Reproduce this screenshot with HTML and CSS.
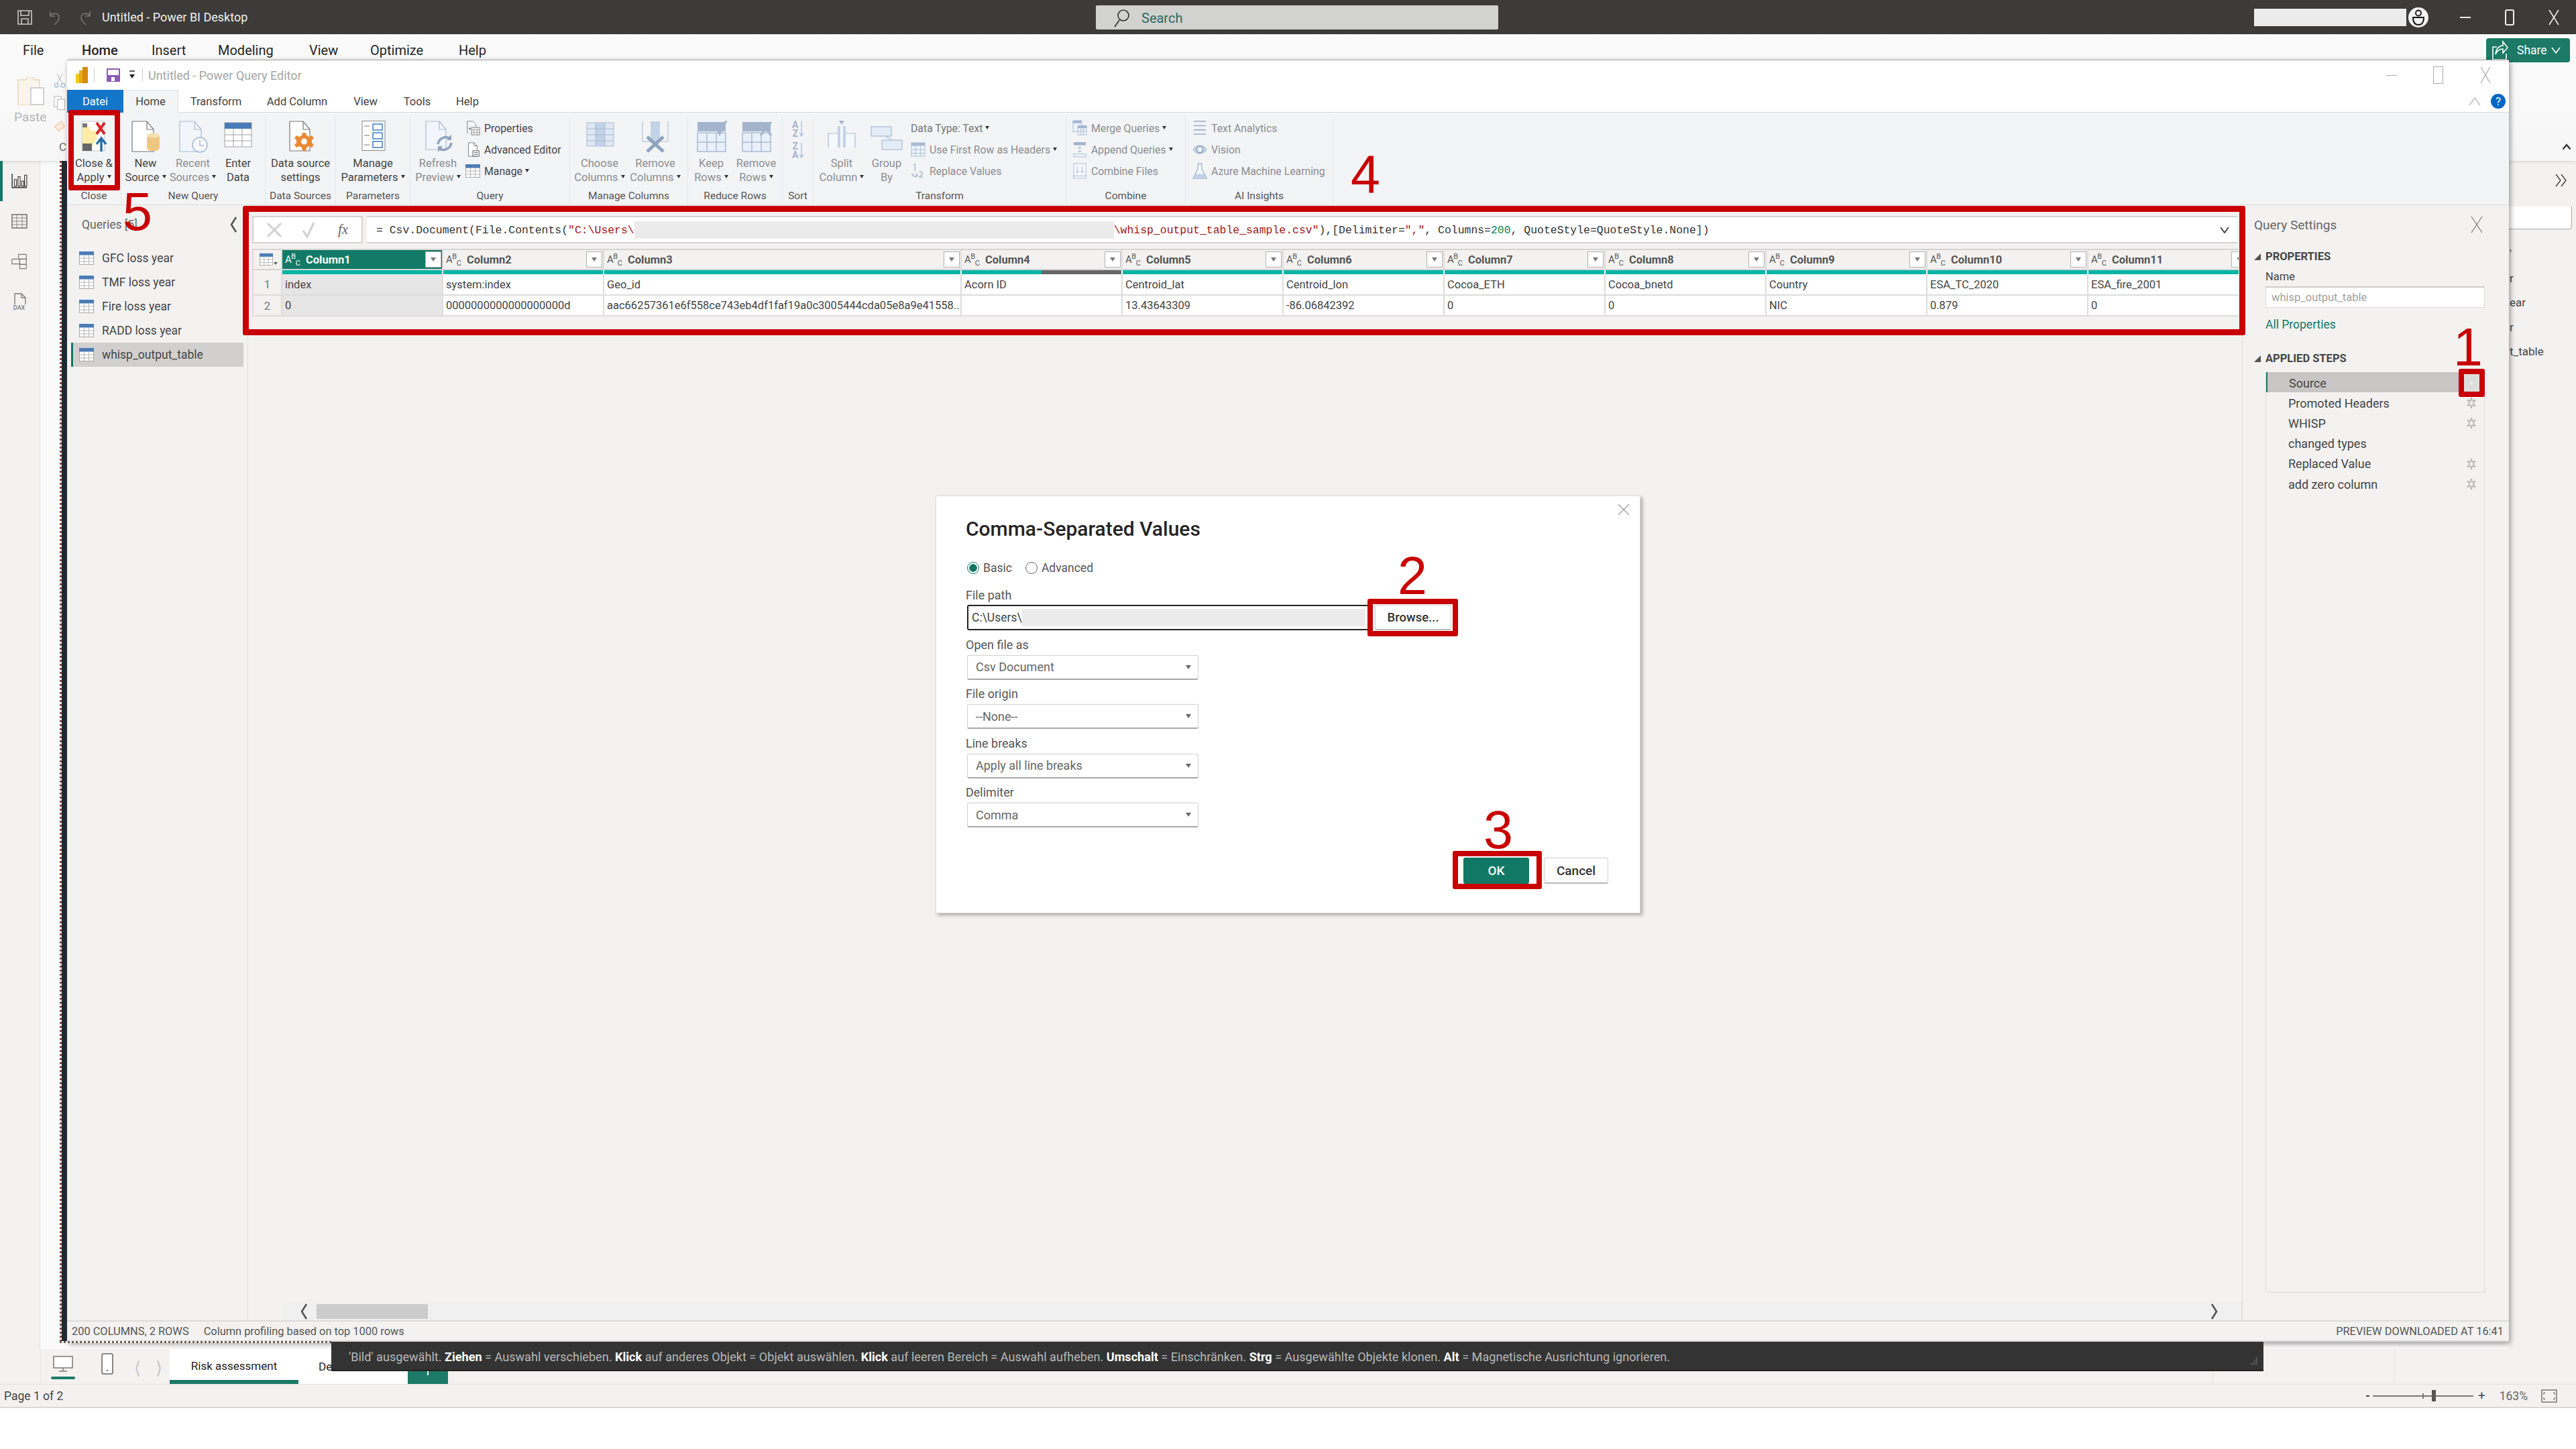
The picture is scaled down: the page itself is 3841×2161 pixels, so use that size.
FILE: index.html
```html
<!DOCTYPE html>
<html lang="en">
<head>
    <meta charset="UTF-8">
    <title>Untitled - Power BI Desktop</title>
    <link rel="stylesheet" href="styles.css">
</head>
<body>
    <!-- shared icons -->
    <svg class="defs" aria-hidden="true">
        <symbol id="i-table" viewBox="0 0 22 20">
            <rect x="0.5" y="0.5" width="21" height="19" fill="#fff" stroke="#a9a9a9"/>
            <rect x="0" y="0" width="22" height="5.5" fill="#4a7cb8"/>
            <path d="M7.5 5v15M14.5 5v15M0 10h22M0 15h22" stroke="#b5b5b5" fill="none"/>
        </symbol>
        <symbol id="i-gear" viewBox="0 0 14 18">
            <path d="M7 1v16M1 4.5l12 9M13 4.5l-12 9" stroke="#b4b4b4" stroke-width="2.4"/>
            <ellipse cx="7" cy="9" rx="4.6" ry="5.8" fill="#c4c4c4"/>
            <ellipse cx="7" cy="9" rx="2.2" ry="2.8" fill="#f3f2f1"/>
        </symbol>
        <symbol id="i-table-pale" viewBox="0 0 24 24">
            <rect x="1" y="1" width="22" height="22" fill="#eef3fa" stroke="#a9bbd3"/>
            <rect x="1" y="1" width="22" height="5" fill="#a9bbd3"/>
            <path d="M8 6v17M16 6v17M1 12h22M1 18h22" stroke="#a9bbd3" fill="none"/>
        </symbol>
        <symbol id="i-rows" viewBox="0 0 48 48">
            <rect x="3" y="18" width="42" height="28" fill="#e9f0fa" stroke="#a9bbd3" stroke-width="1.5"/>
            <path d="M17 18v28M31 18v28M3 32h42" stroke="#a9bbd3" stroke-width="1.5" fill="none"/>
            <rect x="3" y="2" width="42" height="14" fill="#a4b4cd"/>
        </symbol>
    </svg>

    <div class="desktop">
        <header class="titlebar">
            <div class="titlebar-left">
                <svg class="tb-save" viewBox="0 0 22 22"><path d="M1 1h20v20H1zM5 1v7h12V1M6 21v-8h10v8" fill="none" stroke="#c9c9c9" stroke-width="1.6"/></svg>
                <svg class="tb-arrow" viewBox="0 0 22 24"><path d="M4 3v7h7M4 9c5-5 14-3 13 4 0 4-4 7-7 10" fill="none" stroke="#777" stroke-width="1.6"/></svg>
                <svg class="tb-arrow" viewBox="0 0 22 24"><path d="M18 3v7h-7M18 9c-5-5-14-3-13 4 0 4 4 7 7 10" fill="none" stroke="#777" stroke-width="1.6"/></svg>
                <span class="tb-title">Untitled - Power BI Desktop</span>
            </div>
            <div class="tb-search">
                <svg class="tb-search-ic" viewBox="0 0 24 28"><circle cx="15" cy="10" r="8" fill="none" stroke="#333" stroke-width="1.6"/><path d="M9 17L2 27" stroke="#333" stroke-width="1.8"/></svg>
                <span>Search</span>
            </div>
            <div class="titlebar-right">
                <div class="tb-user"></div>
                <svg class="tb-avatar" viewBox="0 0 30 30"><circle cx="15" cy="15" r="15" fill="#f2f2f2"/><circle cx="15" cy="8.5" r="4" fill="none" stroke="#111" stroke-width="1.8"/><path d="M7 15h16c0 7-3 11-8 11s-8-4-8-11z" fill="none" stroke="#111" stroke-width="1.8"/></svg>
                <div class="tb-ctrl tb-ctrl-first"><span class="ctrl-min"></span></div>
                <div class="tb-ctrl"><span class="ctrl-max"></span></div>
                <div class="tb-ctrl">
                    <svg class="ctrl-x" viewBox="0 0 16 24"><path d="M1 1l14 22M15 1L1 23" stroke="#eee" stroke-width="1.6"/></svg>
                </div>
            </div>
        </header>

        <section class="pbi-ribbon">
            <nav class="pbi-menu">
                <span>File</span><span class="is-active">Home</span><span>Insert</span><span>Modeling</span><span>View</span><span>Optimize</span><span>Help</span>
                <div class="share">
                    <svg class="share-ic" viewBox="0 0 24 30"><path d="M7 10H1v19h20v-9" fill="none" stroke="#fff" stroke-width="1.6"/><path d="M5 21c1-9 6-13 11-13V2l7 9-7 8v-6c-5 0-9 3-11 8z" fill="none" stroke="#fff" stroke-width="1.6"/></svg>
                    <span>Share</span>
                    <svg class="share-car" viewBox="0 0 14 12"><path d="M1 2l6 8 6-8" fill="none" stroke="#fff" stroke-width="1.6"/></svg>
                </div>
            </nav>
            <div class="pbi-clip">
                <div class="paste">
                    <svg class="paste-ic" viewBox="0 0 42 42"><path d="M2 4h12l2-4h8l2 4h8v38H2z" fill="#fbf4ec" stroke="#ecd3b4" stroke-width="1.5"/><rect x="21" y="16" width="19" height="25" fill="#fff" stroke="#c3c3c3" stroke-width="1.5"/></svg>
                    <span>Paste</span>
                </div>
                <div class="paste-tools">
                    <svg viewBox="0 0 22 26"><path d="M6 0l10 18M16 0L6 18" stroke="#aaa" fill="none"/><circle cx="5" cy="21" r="3.5" fill="none" stroke="#9cb7d4" stroke-width="1.4"/><circle cx="17" cy="21" r="3.5" fill="none" stroke="#9cb7d4" stroke-width="1.4"/></svg>
                    <svg viewBox="0 0 22 26"><rect x="1" y="1" width="13" height="19" fill="#fff" stroke="#bbb" stroke-width="1.4"/><rect x="7" y="6" width="13" height="19" fill="#fff" stroke="#bbb" stroke-width="1.4"/></svg>
                    <svg viewBox="0 0 22 26"><path d="M2 14l12-9 6 9-10 9z" fill="#fbeadb" stroke="#edc39d" stroke-width="1.5"/></svg>
                </div>
            </div>
            <div class="pbi-clip-label">
                <span class="clip-name">Clipboard</span>
                <svg class="ribbon-caret" viewBox="0 0 14 10"><path d="M1.5 8.5L7 2l5.5 6.5" fill="none" stroke="#333" stroke-width="2.4"/></svg>
            </div>
        </section>

        <main class="pbi-main">
            <aside class="rail">
                <div class="rail-item is-active">
                    <svg class="rail-ic" viewBox="0 0 22 20"><path d="M1 0v19h20" fill="none" stroke="#333" stroke-width="1.3"/><path d="M4 8h3v9H4zM9 4h3v13H9zM14 10h3v7h-3zM18 2h3v15h-3z" fill="none" stroke="#333"/></svg>
                </div>
                <div class="rail-item"><svg class="rail-ic" viewBox="0 0 24 22"><rect x="1" y="1" width="22" height="20" fill="none" stroke="#666" stroke-width="1.4"/><path d="M1 6h22M1 11h22M1 16h22M8 1v20M16 1v20" stroke="#888" fill="none"/></svg></div>
                <div class="rail-item"><svg class="rail-ic" viewBox="0 0 27 26"><path d="M12 1h13v8H12zM1 9h13v8H1zM14 18h11v7H14z" fill="#f3f2f1" stroke="#777" stroke-width="1.3"/><path d="M14 9h11v9H14z" fill="none" stroke="#777" stroke-width="1.3"/></svg></div>
                <div class="rail-item rail-dax">
                    <svg class="rail-ic" viewBox="0 0 24 24"><path d="M5 17V1h10l6 6v10M15 1v6h6" fill="none" stroke="#777" stroke-width="1.3"/></svg>
                    <span>DAX</span>
                </div>
            </aside>
            <div class="canvas"></div>
            <aside class="behind-panel">
                <svg class="behind-chev" viewBox="0 0 20 20"><path d="M2 1l7 9-7 9M10 1l7 9-7 9" fill="none" stroke="#333" stroke-width="1.3"/></svg>
                <div class="behind-card"></div>
                <div class="behind-line behind-line-first">'</div>
                <div class="behind-line">r</div>
                <div class="behind-line">ear</div>
                <div class="behind-line">r</div>
                <div class="behind-line">t_table</div>
            </aside>
        </main>

        <div class="pbi-tabs">
            <div class="view-btns">
                <div class="view-desktop">
                    <svg viewBox="0 0 30 24"><rect x="1" y="1" width="28" height="17" fill="#fff" stroke="#777" stroke-width="1.5"/><path d="M15 18v4M9 23h12" stroke="#777" stroke-width="1.5"/></svg>
                    <span class="view-mark"></span>
                </div>
                <svg class="view-phone" viewBox="0 0 18 32"><rect x="1" y="1" width="16" height="30" rx="2" fill="#fff" stroke="#666" stroke-width="1.5"/><rect x="8" y="25" width="2" height="2" fill="#666"/></svg>
                <span class="page-arrow">&#10216;</span>
                <span class="page-arrow page-arrow-next">&#10217;</span>
            </div>
            <div class="page-tab is-active">Risk assessment</div>
            <div class="page-tab page-tab-second">Deutsch</div>
            <div class="page-add"><span></span></div>
            <div class="tabs-rest"><span class="rest-line"></span></div>
        </div>

        <footer class="pbi-status">
            <span class="page-count">Page 1 of 2</span>
            <div class="zoom-ctl">
                <span class="z-minus"></span>
                <div class="z-track"><span class="z-tick"></span><span class="z-thumb"></span></div>
                <span class="z-plus">+</span>
                <span class="z-pct">163%</span>
                <svg class="z-fit" viewBox="0 0 24 20"><rect x="1" y="1" width="22" height="18" fill="none" stroke="#777" stroke-width="1.5"/><path d="M6 5H4v3M18 5h2v3M6 15H4v-3M18 15h2v-3" fill="none" stroke="#555"/></svg>
            </div>
        </footer>
        <div class="page-end"></div>
    </div>

    <!-- Power Query window -->
    <div class="pq">
        <div class="pq-title">
            <svg class="pq-logo" viewBox="0 0 18 24"><rect x="0" y="10" width="8" height="14" fill="#f2c811"/><rect x="5" y="5" width="8" height="19" fill="#e8ac13"/><rect x="10" y="0" width="8" height="24" fill="#d8890c"/></svg>
            <span class="pq-sep"></span>
            <svg class="pq-save" viewBox="0 0 20 20"><path d="M1 1h18v18H1z" fill="#fff" stroke="#8c5bb5" stroke-width="2"/><rect x="1" y="10" width="18" height="9" fill="#8c5bb5"/><rect x="7" y="13" width="5" height="6" fill="#fff"/></svg>
            <svg class="pq-drop" viewBox="0 0 10 14"><path d="M1 1h8" stroke="#222" stroke-width="1.5"/><path d="M1 6h8l-4 6z" fill="#222"/></svg>
            <span class="pq-sep"></span>
            <span class="pq-name">Untitled - Power Query Editor</span>
            <div class="pq-ctrls">
                <span class="pq-min"></span>
                <span class="pq-max"></span>
                <svg class="pq-x" viewBox="0 0 16 26"><path d="M1 1l14 24M15 1L1 25" stroke="#aaa" stroke-width="1.2"/></svg>
            </div>
        </div>

        <nav class="pq-tabs">
            <span class="pq-tab pq-tab-file">Datei</span>
            <span class="pq-tab pq-tab-home">Home</span>
            <span class="pq-tab">Transform</span>
            <span class="pq-tab">Add Column</span>
            <span class="pq-tab">View</span>
            <span class="pq-tab">Tools</span>
            <span class="pq-tab">Help</span>
            <div class="pq-tabs-end">
                <svg class="pq-caret" viewBox="0 0 18 14"><path d="M1 13L9 2l8 11" fill="none" stroke="#bbb" stroke-width="1.5"/></svg>
                <span class="pq-help">?</span>
            </div>
        </nav>

        <div class="pq-ribbon">
            <div class="rg rg-close">
                <div class="rg-body">
                    <div class="rb">
                        <svg viewBox="0 0 48 48">
                            <rect x="6" y="1" width="34" height="44" fill="#fff" stroke="#c9c9c9"/>
                            <path d="M7 9h11v6h10v14l-4 5v3H7z" fill="#fdeba6"/>
                            <rect x="7" y="4" width="7" height="6" fill="#777"/>
                            <rect x="7" y="34" width="14" height="11" fill="#666"/>
                            <path d="M28 3l12 17M40 3L28 20" stroke="#d9262b" stroke-width="4" fill="none"/>
                            <path d="M35 46V27M28 35l7-9 7 9" stroke="#2a6ea8" stroke-width="3.5" fill="none"/>
                        </svg>
                        <span>Close &amp;<br>Apply <i class="car"></i></span>
                    </div>
                </div>
                <div class="rg-label">Close</div>
            </div>

            <div class="rg rg-newq">
                <div class="rg-body">
                    <div class="rb">
                        <svg viewBox="0 0 48 48"><path d="M4 1h22l10 12v33H4z" fill="#fff" stroke="#777" stroke-width="1.2"/><path d="M26 1v12h10" fill="none" stroke="#777" stroke-width="1.2"/><rect x="26" y="20" width="19" height="25" rx="6" fill="#efc880"/><ellipse cx="35.5" cy="22" rx="9.5" ry="3.5" fill="#f6dfb0"/></svg>
                        <span>New<br>Source <i class="car"></i></span>
                    </div>
                    <div class="rb is-off">
                        <svg viewBox="0 0 48 48"><path d="M4 1h22l10 12v33H4z" fill="#f2f6fc" stroke="#a9bbd3" stroke-width="1.2"/><path d="M26 1v12h10" fill="none" stroke="#a9bbd3" stroke-width="1.2"/><circle cx="34" cy="36" r="11" fill="#f5f7fa" stroke="#a9bbd3" stroke-width="1.6"/><path d="M34 29v8h6" fill="none" stroke="#a9bbd3" stroke-width="1.4"/></svg>
                        <span>Recent<br>Sources <i class="car"></i></span>
                    </div>
                    <div class="rb">
                        <svg viewBox="0 0 48 48"><rect x="4" y="3" width="40" height="36" fill="#fff" stroke="#a0a0a0"/><rect x="4" y="3" width="40" height="9" fill="#4a7cb8"/><path d="M17 12v27M30 12v27M4 21h40M4 30h40" stroke="#a0a0a0" fill="none"/></svg>
                        <span>Enter<br>Data</span>
                    </div>
                </div>
                <div class="rg-label">New Query</div>
            </div>

            <div class="rg rg-ds">
                <div class="rg-body">
                    <div class="rb">
                        <svg viewBox="0 0 48 48"><path d="M8 1h20l10 12v32H8z" fill="#fff" stroke="#777" stroke-width="1.2"/><path d="M28 1v12h10" fill="none" stroke="#777" stroke-width="1.2"/><path d="M28 19l5 0 1 4 4 2 4-2 3 4-3 3v4l3 3-3 4-4-2-4 2-1 5h-5l-1-5-4-2-4 2-3-4 3-3v-4l-3-3 3-4 4 2 4-2z" transform="translate(-1 -1)" fill="#ea8a34"/><circle cx="29.5" cy="31" r="4.5" fill="#fff"/></svg>
                        <span>Data source<br>settings</span>
                    </div>
                </div>
                <div class="rg-label">Data Sources</div>
            </div>

            <div class="rg rg-params">
                <div class="rg-body">
                    <div class="rb">
                        <svg viewBox="0 0 48 48"><rect x="8" y="0.5" width="34" height="44" fill="#fff" stroke="#8a8a8a"/><path d="M11 8h8M11 22h8M11 36h8" stroke="#777"/><rect x="24" y="5" width="14" height="9" fill="#fff" stroke="#3d7ec4" stroke-width="1.5"/><rect x="24" y="18" width="14" height="9" fill="#fff" stroke="#3d7ec4" stroke-width="1.5"/><rect x="24" y="31" width="14" height="9" fill="#fff" stroke="#3d7ec4" stroke-width="1.5"/></svg>
                        <span>Manage<br>Parameters <i class="car"></i></span>
                    </div>
                </div>
                <div class="rg-label">Parameters</div>
            </div>

            <div class="rg rg-query">
                <div class="rg-body">
                    <div class="rb is-off">
                        <svg viewBox="0 0 48 48"><path d="M6 1h20l10 12v30H6z" fill="#f2f6fc" stroke="#a9bbd3" stroke-width="1.2"/><path d="M26 1v12h10" fill="none" stroke="#a9bbd3" stroke-width="1.2"/><path d="M24 35a12 12 0 0 1 19-8M44 33a12 12 0 0 1-19 8" fill="none" stroke="#8ea2bd" stroke-width="3.5"/><path d="M44 20v9h-7zM24 47v-9h7z" fill="#8ea2bd"/></svg>
                        <span>Refresh<br>Preview <i class="car"></i></span>
                    </div>
                    <div class="rs-col">
                        <div class="rs"><svg viewBox="0 0 24 24"><path d="M3 1h9l5 5v4M3 1v20" fill="#fff" stroke="#777"/><rect x="10" y="11" width="13" height="12" fill="#fff" stroke="#777"/><path d="M10 15h13M10 19h13M14 11v12M19 11v12" stroke="#999"/><circle cx="7" cy="13" r="1.5" fill="#777"/></svg><span>Properties</span></div>
                        <div class="rs"><svg viewBox="0 0 24 24"><path d="M5 1h9l5 5v17H5z" fill="#fff" stroke="#777"/><path d="M14 1v5h5" fill="none" stroke="#777"/><rect x="12" y="14" width="10" height="9" fill="#fff" stroke="#555"/><path d="M14 17h6M14 20h6" stroke="#555"/></svg><span>Advanced Editor</span></div>
                        <div class="rs"><svg viewBox="0 0 24 24"><use href="#i-table"/></svg><span>Manage <i class="car"></i></span></div>
                    </div>
                </div>
                <div class="rg-label">Query</div>
            </div>

            <div class="rg rg-cols">
                <div class="rg-body">
                    <div class="rb is-off">
                        <svg viewBox="0 0 48 48"><rect x="5" y="3" width="40" height="35" fill="#dfe8f4" stroke="#a9bbd3"/><rect x="18" y="3" width="14" height="35" fill="#c3d2e6"/><path d="M18 3v35M32 3v35M5 12h40M5 21h40M5 30h40" stroke="#a9bbd3" fill="none"/></svg>
                        <span>Choose<br>Columns <i class="car"></i></span>
                    </div>
                    <div class="rb is-off">
                        <svg viewBox="0 0 48 48"><path d="M5 1v30h38V1" fill="none" stroke="#a9bbd3"/><rect x="17" y="1" width="14" height="30" fill="#c3d2e6"/><path d="M12 24l24 22M36 24L12 46" stroke="#8ea2bd" stroke-width="5"/></svg>
                        <span>Remove<br>Columns <i class="car"></i></span>
                    </div>
                </div>
                <div class="rg-label">Manage Columns</div>
            </div>

            <div class="rg rg-rows">
                <div class="rg-body">
                    <div class="rb is-off">
                        <svg viewBox="0 0 48 48"><use href="#i-rows"/><path d="M30 8l6 12L46 0" fill="none" stroke="#a4b4cd" stroke-width="3"/></svg>
                        <span>Keep<br>Rows <i class="car"></i></span>
                    </div>
                    <div class="rb is-off">
                        <svg viewBox="0 0 48 48"><use href="#i-rows"/><path d="M30 2l16 20M46 2L30 22" stroke="#a4b4cd" stroke-width="3"/></svg>
                        <span>Remove<br>Rows <i class="car"></i></span>
                    </div>
                </div>
                <div class="rg-label">Reduce Rows</div>
            </div>

            <div class="rg rg-sort">
                <div class="rg-body rg-sort-body">
                    <div class="sort-btn"><span>A<br>Z</span><svg viewBox="0 0 8 24"><path d="M4 0v22M1 17l3 5 3-5" fill="none" stroke="#a9bbd3" stroke-width="1.2"/></svg></div>
                    <div class="sort-btn"><span>Z<br>A</span><svg viewBox="0 0 8 24"><path d="M4 0v22M1 17l3 5 3-5" fill="none" stroke="#a9bbd3" stroke-width="1.2"/></svg></div>
                </div>
                <div class="rg-label">Sort</div>
            </div>

            <div class="rg rg-trans">
                <div class="rg-body">
                    <div class="rb is-off">
                        <svg viewBox="0 0 48 48"><path d="M4 40V19h16v21M28 40V19h16v21" fill="#f5f8fc" stroke="#a9bbd3" stroke-width="1.2"/><rect x="18" y="8" width="12" height="32" fill="#f5f8fc"/><rect x="18" y="8" width="4" height="32" fill="#c3d2e6"/><rect x="26" y="8" width="4" height="32" fill="#c3d2e6"/><path d="M20 0h8l-4 6z" fill="#a4b4cd"/></svg>
                        <span>Split<br>Column <i class="car"></i></span>
                    </div>
                    <div class="rb is-off">
                        <svg viewBox="0 0 48 48"><rect x="1" y="9" width="30" height="14" fill="#e4ecf6" stroke="#a9bbd3" stroke-width="1.2"/><rect x="17" y="29" width="30" height="14" fill="#e4ecf6" stroke="#a9bbd3" stroke-width="1.2"/><path d="M22 23l10 6" stroke="#a9bbd3" stroke-width="1.2"/></svg>
                        <span>Group<br>By</span>
                    </div>
                    <div class="rs-col rs-col-trans">
                        <div class="rs rs-text"><span>Data Type: Text <i class="car"></i></span></div>
                        <div class="rs"><svg viewBox="0 0 24 24"><use href="#i-table-pale"/></svg><span>Use First Row as Headers <i class="car"></i></span></div>
                        <div class="rs"><svg viewBox="0 0 24 24"><path d="M4 2l3-1v11M14 14c3-2 6 0 5 3l-5 5h6" fill="none" stroke="#a4b4cd" stroke-width="1.5"/><path d="M2 16c2 6 6 6 9 3M8 16l3 3-3 3" fill="none" stroke="#a4b4cd" stroke-width="1.5"/></svg><span>Replace Values</span></div>
                    </div>
                </div>
                <div class="rg-label">Transform</div>
            </div>

            <div class="rg rg-combine">
                <div class="rg-body">
                    <div class="rs-col">
                        <div class="rs"><svg viewBox="0 0 24 26"><rect x="1" y="1" width="14" height="18" fill="#eef3fa" stroke="#a9bbd3"/><rect x="1" y="1" width="14" height="4" fill="#a4b4cd"/><rect x="9" y="9" width="14" height="15" fill="#eef3fa" stroke="#a9bbd3"/><rect x="9" y="9" width="14" height="4" fill="#a4b4cd"/><path d="M14 13v11M18 13v11M9 18h14" stroke="#a9bbd3"/></svg><span>Merge Queries <i class="car"></i></span></div>
                        <div class="rs"><svg viewBox="0 0 24 26"><rect x="2" y="1" width="20" height="5" fill="#a4b4cd"/><rect x="2" y="20" width="20" height="5" fill="#eef3fa" stroke="#a9bbd3"/><path d="M12 8l3 3H9zM12 18l3-3H9z" fill="#a4b4cd"/></svg><span>Append Queries <i class="car"></i></span></div>
                        <div class="rs"><svg viewBox="0 0 24 26"><rect x="2" y="1" width="20" height="24" fill="#f5f8fc" stroke="#a9bbd3"/><path d="M8 6v10M5 13l3 3 3-3M16 6v10M13 13l3 3 3-3M2 21h20" fill="none" stroke="#a4b4cd"/></svg><span>Combine Files</span></div>
                    </div>
                </div>
                <div class="rg-label">Combine</div>
            </div>

            <div class="rg rg-ai">
                <div class="rg-body">
                    <div class="rs-col">
                        <div class="rs"><svg viewBox="0 0 24 26"><path d="M2 2h20M2 9h20M2 16h20M2 23h20" stroke="#a4b4cd" stroke-width="2"/></svg><span>Text Analytics</span></div>
                        <div class="rs"><svg viewBox="0 0 24 26"><path d="M1 13c5-9 17-9 22 0-5 9-17 9-22 0z" fill="#c3d2e6" stroke="#a4b4cd"/><circle cx="12" cy="13" r="5" fill="#f5f8fc" stroke="#8ea2bd" stroke-width="2"/></svg><span>Vision</span></div>
                        <div class="rs"><svg viewBox="0 0 24 26"><path d="M9 1h6v8l8 16H1L9 9z" fill="#f5f8fc" stroke="#a4b4cd" stroke-width="1.5"/><path d="M5 18h14l3 7H2z" fill="#c3d2e6"/></svg><span>Azure Machine Learning</span></div>
                    </div>
                </div>
                <div class="rg-label">AI Insights</div>
            </div>
        </div>

        <div class="pq-body">
            <aside class="queries">
                <div class="queries-head">
                    <span>Queries [5]</span>
                    <svg class="queries-chev" viewBox="0 0 12 26"><path d="M10 2L3 13l7 11" fill="none" stroke="#555" stroke-width="2.6"/></svg>
                </div>
                <div class="query"><svg><use href="#i-table"/></svg><span>GFC loss year</span></div>
                <div class="query"><svg><use href="#i-table"/></svg><span>TMF loss year</span></div>
                <div class="query"><svg><use href="#i-table"/></svg><span>Fire loss year</span></div>
                <div class="query"><svg><use href="#i-table"/></svg><span>RADD loss year</span></div>
                <div class="query is-selected"><svg><use href="#i-table"/></svg><span>whisp_output_table</span></div>
            </aside>

            <section class="center">
                <div class="formula">
                    <div class="fx-btns">
                        <svg viewBox="0 0 24 24"><path d="M2 2l20 20M22 2L2 22" stroke="#d0d0d0" stroke-width="3"/></svg>
                        <svg viewBox="0 0 24 24"><path d="M4 13l6 9L20 1" fill="none" stroke="#d0d0d0" stroke-width="3"/></svg>
                        <span class="fx-label">fx</span>
                    </div>
                    <div class="fx-input">
                        <span>= Csv.Document(File.Contents(</span><span class="s">"C:\Users\</span><span class="fx-redact"></span><span class="s">\whisp_output_table_sample.csv"</span><span>),[Delimiter=</span><span class="s">","</span><span>, Columns=</span><span class="n">200</span><span>, QuoteStyle=QuoteStyle.None])</span>
                        <svg class="fx-more" viewBox="0 0 14 10"><path d="M1 1l6 8 6-8" fill="none" stroke="#444" stroke-width="2"/></svg>
                    </div>
                </div>

                <div class="grid">
                    <div class="th th-corner"><svg class="corner-ic"><use href="#i-table"/></svg><i class="corner-car"></i></div>
                    <div class="th is-sel"><span class="abc">A<sup>B</sup><sub>C</sub></span><b>Column1</b><i class="filter"></i></div>
                    <div class="th"><span class="abc">A<sup>B</sup><sub>C</sub></span><b>Column2</b><i class="filter"></i></div>
                    <div class="th"><span class="abc">A<sup>B</sup><sub>C</sub></span><b>Column3</b><i class="filter"></i></div>
                    <div class="th"><span class="abc">A<sup>B</sup><sub>C</sub></span><b>Column4</b><i class="filter"></i></div>
                    <div class="th"><span class="abc">A<sup>B</sup><sub>C</sub></span><b>Column5</b><i class="filter"></i></div>
                    <div class="th"><span class="abc">A<sup>B</sup><sub>C</sub></span><b>Column6</b><i class="filter"></i></div>
                    <div class="th"><span class="abc">A<sup>B</sup><sub>C</sub></span><b>Column7</b><i class="filter"></i></div>
                    <div class="th"><span class="abc">A<sup>B</sup><sub>C</sub></span><b>Column8</b><i class="filter"></i></div>
                    <div class="th"><span class="abc">A<sup>B</sup><sub>C</sub></span><b>Column9</b><i class="filter"></i></div>
                    <div class="th"><span class="abc">A<sup>B</sup><sub>C</sub></span><b>Column10</b><i class="filter"></i></div>
                    <div class="th"><span class="abc">A<sup>B</sup><sub>C</sub></span><b>Column11</b><i class="filter"></i></div>

                    <div class="qb qb-corner"></div>
                    <div class="qb"></div><div class="qb"></div><div class="qb"></div>
                    <div class="qb qb-half"></div>
                    <div class="qb"></div><div class="qb"></div><div class="qb"></div><div class="qb"></div><div class="qb"></div><div class="qb"></div><div class="qb"></div>

                    <div class="td rn">1</div>
                    <div class="td is-sel">index</div>
                    <div class="td">system:index</div>
                    <div class="td">Geo_id</div>
                    <div class="td">Acorn ID</div>
                    <div class="td">Centroid_lat</div>
                    <div class="td">Centroid_lon</div>
                    <div class="td">Cocoa_ETH</div>
                    <div class="td">Cocoa_bnetd</div>
                    <div class="td">Country</div>
                    <div class="td">ESA_TC_2020</div>
                    <div class="td">ESA_fire_2001</div>

                    <div class="td rn">2</div>
                    <div class="td is-sel">0</div>
                    <div class="td">0000000000000000000d</div>
                    <div class="td">aac66257361e6f558ce743eb4df1faf19a0c3005444cda05e8a9e41558...</div>
                    <div class="td"></div>
                    <div class="td">13.43643309</div>
                    <div class="td">-86.06842392</div>
                    <div class="td">0</div>
                    <div class="td">0</div>
                    <div class="td">NIC</div>
                    <div class="td">0.879</div>
                    <div class="td">0</div>
                </div>

                <div class="hscroll">
                    <svg class="hs-left" viewBox="0 0 12 26"><path d="M10 2L3 13l7 11" fill="none" stroke="#555" stroke-width="2.6"/></svg>
                    <span class="hs-thumb"></span>
                    <svg class="hs-right" viewBox="0 0 12 26"><path d="M2 2l7 11-7 11" fill="none" stroke="#555" stroke-width="2.6"/></svg>
                </div>
            </section>

            <aside class="settings">
                <div class="settings-head">
                    <span>Query Settings</span>
                    <svg viewBox="0 0 18 26"><path d="M1 1l16 24M17 1L1 25" stroke="#777" stroke-width="1.2"/></svg>
                </div>
                <div class="settings-sec settings-sec-first">PROPERTIES</div>
                <div class="settings-name">Name</div>
                <div class="settings-input">whisp_output_table</div>
                <div class="settings-link">All Properties</div>
                <div class="settings-sec settings-sec-steps">APPLIED STEPS</div>
                <div class="steps">
                    <div class="step is-selected"><span>Source</span><svg><use href="#i-gear"/></svg></div>
                    <div class="step"><span>Promoted Headers</span><svg><use href="#i-gear"/></svg></div>
                    <div class="step"><span>WHISP</span><svg><use href="#i-gear"/></svg></div>
                    <div class="step"><span>changed types</span></div>
                    <div class="step"><span>Replaced Value</span><svg><use href="#i-gear"/></svg></div>
                    <div class="step"><span>add zero column</span><svg><use href="#i-gear"/></svg></div>
                </div>
            </aside>
        </div>

        <div class="pq-status">
            <span>200 COLUMNS, 2 ROWS</span>
            <span>Column profiling based on top 1000 rows</span>
            <span class="pq-status-right">PREVIEW DOWNLOADED AT 16:41</span>
        </div>
    </div>

    <!-- dialog -->
    <div class="dialog">
        <svg class="dialog-x" viewBox="0 0 18 18"><path d="M1 1l16 16M17 1L1 17" stroke="#999" stroke-width="1.2"/></svg>
        <h2>Comma-Separated Values</h2>
        <div class="radios">
            <span class="radio is-on"></span><span>Basic</span>
            <span class="radio radio-adv"></span><span>Advanced</span>
        </div>
        <div class="d-label d-label-path">File path</div>
        <div class="path-row">
            <div class="path-input"><span class="path-text">C:\Users\</span><span class="path-redact"></span></div>
            <div class="d-btn browse">Browse...</div>
        </div>
        <div class="field"><div class="d-label">Open file as</div><div class="select">Csv Document<i></i></div></div>
        <div class="field"><div class="d-label">File origin</div><div class="select">--None--<i></i></div></div>
        <div class="field"><div class="d-label">Line breaks</div><div class="select">Apply all line breaks<i></i></div></div>
        <div class="field"><div class="d-label">Delimiter</div><div class="select">Comma<i></i></div></div>
        <div class="dialog-foot">
            <div class="d-btn d-ok">OK</div>
            <div class="d-btn d-cancel">Cancel</div>
        </div>
    </div>

    <!-- selection outline of the picture behind the window -->
    <div class="edge-left"></div>
    <div class="edge-bottom"></div>

    <!-- tooltip -->
    <div class="hint">
        <span>'Bild' ausgewählt. <b>Ziehen</b> = Auswahl verschieben. <b>Klick</b> auf anderes Objekt = Objekt auswählen. <b>Klick</b> auf leeren Bereich = Auswahl aufheben. <b>Umschalt</b> = Einschränken. <b>Strg</b> = Ausgewählte Objekte klonen. <b>Alt</b> = Magnetische Ausrichtung ignorieren.</span>
        <svg class="hint-grip" viewBox="0 0 12 14"><path d="M10 1v12M7 5v8M4 9v4M1 11v2" stroke="#aaa" stroke-dasharray="1 1" fill="none"/></svg>
    </div>

    <!-- annotations -->
    <div class="frame frame-close"></div>
    <div class="frame frame-formula"></div>
    <div class="frame frame-step"></div>
    <div class="frame frame-browse"></div>
    <div class="frame frame-ok"></div>
    <span class="num num-1">1</span>
    <span class="num num-2">2</span>
    <span class="num num-3">3</span>
    <span class="num num-4">4</span>
    <span class="num num-5">5</span>
</body>
</html>
```

FILE: styles.css
```css
/* General Page Styling */
body {
    margin: 0;
    width: 3841px;
    height: 2161px;
    overflow: hidden;
    position: relative;
    background: #ffffff;
    font-family: 'Roboto', 'Liberation Sans', sans-serif;
    color: #333333;
}

.defs {
    width: 0;
    height: 0;
    position: absolute;
}

.desktop {
    display: flex;
    flex-direction: column;
    height: 2161px;
}

/* Title bar */
.titlebar {
    height: 51px;
    background: #3c3b39;
    display: flex;
    align-items: center;
    flex: none;
}

.titlebar-left {
    width: 1634px;
    flex: none;
    display: flex;
    align-items: center;
    padding-left: 26px;
    box-sizing: border-box;
}

.tb-save {
    width: 22px;
    height: 22px;
    margin-right: 23px;
}

.tb-arrow {
    width: 22px;
    height: 24px;
    margin-right: 23px;
}

.tb-title {
    color: #f0f0f0;
    font-size: 18px;
    margin-left: -9px;
}

.tb-search {
    width: 600px;
    height: 36px;
    flex: none;
    background: #d2d2d0;
    border-radius: 2px;
    display: flex;
    align-items: center;
    padding: 2px 0 0 26px;
    box-sizing: border-box;
    color: #2a6b5f;
    font-size: 20px;
}

.tb-search-ic {
    width: 24px;
    height: 28px;
    margin-right: 18px;
}

.titlebar-right {
    flex: 1;
    display: flex;
    align-items: center;
    padding-left: 1127px;
}

.tb-user {
    width: 227px;
    height: 26px;
    background: #ebebeb;
    flex: none;
}

.tb-avatar {
    width: 30px;
    height: 30px;
    margin-left: 3px;
    flex: none;
}

.tb-ctrl {
    width: 66px;
    flex: none;
    display: flex;
    justify-content: center;
    align-items: center;
}

.tb-ctrl-first {
    margin-left: 22px;
}

.ctrl-min {
    width: 16px;
    height: 2px;
    background: #eeeeee;
}

.ctrl-max {
    width: 14px;
    height: 24px;
    border: 2px solid #eeeeee;
    border-radius: 3px;
    box-sizing: border-box;
}

.ctrl-x {
    width: 16px;
    height: 24px;
}

/* Power BI ribbon, mostly hidden behind the query window */
.pbi-ribbon {
    height: 189px;
    flex: none;
    background: linear-gradient(#fafafa 0, #f8f8f8 70%, #f6f6f6 100%);
    box-shadow: 0 2px 4px rgba(0, 0, 0, 0.1);
    display: flex;
    flex-direction: column;
    position: relative;
}

.pbi-menu {
    height: 42px;
    padding: 6px 9px 0 34px;
    box-sizing: border-box;
    display: grid;
    grid-template-columns: 88px 104px 99px 136px 91px 132px 60px 1fr;
    align-items: center;
    font-size: 20px;
    color: #252423;
}

.pbi-menu .is-active {
    font-weight: 500;
}

.share {
    justify-self: end;
    width: 125px;
    height: 36px;
    border-radius: 4px;
    background: #1c7a66;
    color: #ffffff;
    display: flex;
    align-items: center;
    font-size: 17.5px;
    padding-left: 9px;
    box-sizing: border-box;
}

.share-ic {
    width: 24px;
    height: 30px;
    margin-right: 13px;
}

.share-car {
    width: 14px;
    height: 12px;
    margin-left: 6px;
}

.pbi-clip {
    display: flex;
    padding: 22px 0 0 21px;
    height: 105px;
    box-sizing: border-box;
}

.paste {
    width: 57px;
    display: flex;
    flex-direction: column;
    color: #b5b5b5;
    font-size: 19px;
}

.paste-ic {
    width: 42px;
    height: 42px;
    margin: 0 0 6px 4px;
}

.paste-tools {
    display: flex;
    flex-direction: column;
    margin-top: -5px;
    gap: 12px;
}

.paste-tools svg {
    width: 22px;
    height: 26px;
}

.pbi-clip-label {
    flex: 1;
    display: flex;
    align-items: center;
    padding: 0 7px 0 88px;
    font-size: 17px;
    color: #666666;
}

.ribbon-caret {
    width: 14px;
    height: 10px;
    margin-left: auto;
}

/* Power BI main area */
.pbi-main {
    flex: 1;
    display: flex;
    min-height: 0;
    background: #fafafa;
}

.rail {
    width: 60px;
    background: #f3f2f1;
    border-right: 1px solid #e1e1e1;
    box-sizing: border-box;
    display: flex;
    flex-direction: column;
}

.rail-item {
    height: 60px;
    display: flex;
    align-items: center;
    justify-content: center;
    padding-right: 2px;
    box-sizing: border-box;
    position: relative;
}

.rail-item.is-active {
    border-left: 4px solid #117865;
    padding-right: 6px;
}

.rail-ic {
    width: 24px;
    height: 24px;
}

.rail-dax {
    flex-direction: column;
    position: relative;
}

.rail-dax span {
    font-size: 9px;
    color: #555555;
    margin-top: -7px;
}

.canvas {
    flex: 1;
}

.behind-panel {
    width: 100px;
    background: #f3f2f1;
    box-sizing: border-box;
    display: flex;
    flex-direction: column;
    font-size: 17px;
    color: #444444;
}

.behind-chev {
    width: 20px;
    height: 20px;
    margin: 19px 0 0 68px;
}

.behind-card {
    margin-top: 29px;
    width: 94px;
    height: 34px;
    background: #ffffff;
    border-bottom: 1px solid #aaaaaa;
    border-right: 1px solid #aaaaaa;
    border-radius: 0 0 4px 0;
    box-sizing: border-box;
}

.behind-line {
    height: 36.5px;
    line-height: 36.5px;
    padding-left: 1px;
}

.behind-line-first {
    margin-top: 18px;
}

/* Power BI page tabs */
.pbi-tabs {
    height: 53px;
    flex: none;
    display: flex;
    background: #f3f2f1;
    border-bottom: 1px solid #e2e2e2;
    box-sizing: border-box;
    padding-left: 60px;
}

.view-btns {
    width: 193px;
    display: flex;
    align-items: flex-start;
    border-left: 1px solid #e6e6e6;
    box-sizing: border-box;
    position: relative;
    padding: 6px 0 0 15px;
}

.view-desktop {
    width: 36px;
    display: flex;
    flex-direction: column;
    align-items: center;
    margin-top: 4px;
}

.view-desktop svg {
    width: 30px;
    height: 24px;
}

.view-mark {
    width: 36px;
    height: 4px;
    border-radius: 2px;
    background: #1c7a66;
    margin-top: 7px;
}

.view-phone {
    width: 18px;
    height: 32px;
    margin-left: 39px;
}

.page-arrow {
    font-size: 26px;
    color: #c8c8c8;
    margin: 4px 0 0 31px;
    line-height: 36px;
}

.page-arrow-next {
    margin-left: 22px;
}

.page-tab {
    width: 192px;
    flex: none;
    background: #ffffff;
    display: flex;
    align-items: center;
    justify-content: center;
    font-size: 17px;
    box-sizing: border-box;
    color: #252423;
}

.page-tab-second {
    width: 163px;
    justify-content: flex-start;
    padding-left: 30px;
}

.page-tab.is-active {
    border-bottom: 6px solid #1c7a66;
    padding-top: 3px;
}

.page-add {
    width: 60px;
    flex: none;
    background: #1c7a66;
    display: flex;
    justify-content: center;
    align-items: flex-start;
    padding-top: 33px;
    box-sizing: border-box;
}

.page-add span {
    width: 2px;
    height: 6px;
    background: #ffffff;
}

.tabs-rest {
    flex: 1;
    position: relative;
}

.rest-line {
    display: block;
    height: 100%;
    width: 272px;
    margin-left: 2631px;
    border-left: 1px solid #e2e2e2;
    border-right: 1px solid #e2e2e2;
    box-sizing: border-box;
}

/* Power BI status bar */
.pbi-status {
    height: 35px;
    flex: none;
    background: #f3f2f1;
    border-bottom: 2px solid #d8d8d8;
    box-sizing: border-box;
    display: flex;
    align-items: center;
    padding: 0 28px 0 6px;
    font-size: 17.5px;
    color: #444444;
}

.zoom-ctl {
    margin-left: auto;
    display: flex;
    align-items: center;
}

.z-minus {
    width: 5px;
    height: 2px;
    background: #444444;
    margin-right: 5px;
}

.z-track {
    width: 150px;
    height: 2px;
    background: #777777;
    position: relative;
    display: flex;
    align-items: center;
}

.z-tick {
    width: 2px;
    height: 8px;
    background: #777777;
    margin-left: 74px;
}

.z-thumb {
    width: 6px;
    height: 17px;
    background: #555555;
    margin-left: 12px;
}

.z-plus {
    margin-left: 7px;
    font-size: 19px;
}

.z-pct {
    margin-left: 21px;
    color: #666666;
}

.z-fit {
    width: 24px;
    height: 20px;
    margin-left: 20px;
}

.page-end {
    height: 61px;
    flex: none;
    background: #ffffff;
}

/* Query window */
.pq {
    position: absolute;
    left: 100px;
    top: 89px;
    width: 3641px;
    height: 1912px;
    background: #f3f2f1;
    border-top: 1px solid #a5a5a5;
    box-sizing: border-box;
    box-shadow: 2px 3px 8px rgba(0, 0, 0, 0.4);
    display: flex;
    flex-direction: column;
}

.pq-title {
    height: 44px;
    background: #ffffff;
    flex: none;
    display: flex;
    align-items: center;
    padding-left: 13px;
}

.pq-logo {
    width: 18px;
    height: 24px;
}

.pq-sep {
    width: 1px;
    height: 20px;
    background: #cccccc;
    margin: 0 0 0 9px;
}

.pq-save {
    width: 20px;
    height: 20px;
    margin-left: 18px;
}

.pq-drop {
    width: 10px;
    height: 14px;
    margin-left: 13px;
}

.pq-drop + .pq-sep {
    margin-left: 10px;
}

.pq-name {
    margin-left: 8px;
    font-size: 18px;
    color: #a5a5a5;
}

.pq-ctrls {
    margin-left: auto;
    display: grid;
    grid-template-columns: 69px 71px 70px;
    justify-items: center;
    align-items: center;
    width: 210px;
}

.pq-min {
    width: 16px;
    height: 1px;
    background: #aaaaaa;
}

.pq-max {
    width: 15px;
    height: 26px;
    border: 1px solid #aaaaaa;
    box-sizing: border-box;
}

.pq-x {
    width: 16px;
    height: 26px;
}

.pq-tabs {
    height: 34px;
    flex: none;
    background: #ffffff;
    display: grid;
    grid-template-columns: 84px 82px 112px 130px 74px 80px 70px 1fr;
    align-items: stretch;
    font-size: 16.5px;
    color: #3f3f3f;
    box-shadow: inset 0 -1px 0 #dcdcdc;
}

.pq-tab {
    display: flex;
    align-items: center;
    justify-content: center;
}

.pq-tab-file {
    background: #1376c8;
    color: #ffffff;
}

.pq-tab-home {
    background: #f3f4f6;
    border: 1px solid #e0e0e0;
    border-width: 1px 1px 0 0;
}

.pq-tabs-end {
    display: flex;
    align-items: center;
    justify-content: flex-end;
    padding-right: 5px;
}

.pq-caret {
    width: 18px;
    height: 14px;
    margin-right: 15px;
}

.pq-help {
    width: 22px;
    height: 22px;
    border-radius: 50%;
    background: #0066c4;
    color: #ffffff;
    font-size: 17px;
    text-align: center;
    line-height: 22px;
}

/* Query ribbon */
.pq-ribbon {
    height: 138px;
    flex: none;
    background: #f3f4f6;
    border-bottom: 1px solid #dddddd;
    box-sizing: border-box;
    display: flex;
    padding-top: 4px;
}

.rg {
    height: 132px;
    display: flex;
    flex-direction: column;
    border-right: 1px solid #e4e6e9;
    box-sizing: border-box;
    flex: none;
}

.rg-body {
    height: 108px;
    display: flex;
}

.rg-label {
    height: 24px;
    line-height: 24px;
    text-align: center;
    font-size: 15.5px;
    color: #555555;
    white-space: nowrap;
}

.rg-close { width: 81px; }
.rg-newq { width: 215px; }
.rg-ds { width: 105px; }
.rg-params { width: 111px; }
.rg-query { width: 238px; }
.rg-cols { width: 176px; }
.rg-rows { width: 141px; }
.rg-sort { width: 46px; }
.rg-trans { width: 377px; }
.rg-combine { width: 178px; }
.rg-ai { width: 220px; }

.rb {
    padding-top: 8px;
    display: flex;
    flex-direction: column;
    align-items: center;
    font-size: 16.5px;
    line-height: 21px;
    text-align: center;
    color: #444444;
    white-space: nowrap;
    box-sizing: border-box;
    flex: none;
    width: 100%;
}

.rb svg {
    width: 48px;
    height: 48px;
    margin-bottom: 5px;
}

.rb.is-off {
    color: #8a8d91;
}

.rg-newq .rb:nth-child(1) { width: 72px; }
.rg-newq .rb:nth-child(2) { width: 69px; }
.rg-newq .rb:nth-child(3) { width: 66px; }
.rg-query .rb { width: 82px; }
.rg-cols .rb { width: 78px; margin-left: 5px; }
.rg-rows .rb { width: 65px; margin-left: 2px; }
.rg-trans .rb:nth-child(1) { width: 84px; }
.rg-trans .rb:nth-child(2) { width: 50px; }

.car {
    display: inline-block;
    width: 0;
    height: 0;
    border: 3.5px solid transparent;
    border-top: 5px solid #333333;
    border-bottom: 0;
    vertical-align: 4px;
}

.rs-col {
    padding-top: 3px;
    display: flex;
    flex-direction: column;
}

.rg-combine .rs-col {
    margin-left: 9px;
}

.rg-ai .rs-col {
    margin-left: 10px;
}

.rs-col-trans {
    margin-left: 11px;
}

.rs {
    height: 32px;
    display: flex;
    align-items: center;
    font-size: 15.8px;
    color: #8a8d91;
    white-space: nowrap;
}

.rg-query .rs {
    color: #444444;
}

.rs svg {
    width: 22px;
    height: 24px;
    margin-right: 6px;
    flex: none;
}

.rs-text {
    color: #777777;
}

.rg-sort-body {
    flex-direction: column;
    padding: 8px 0 0 14px;
    gap: 4px;
    box-sizing: border-box;
}

.sort-btn {
    display: flex;
    height: 28px;
    gap: 1px;
}

.sort-btn span {
    font-size: 14px;
    font-weight: 700;
    line-height: 13px;
    color: #a4b4cd;
    text-align: center;
}

.sort-btn svg {
    width: 8px;
    height: 26px;
}

/* Query window panes */
.pq-body {
    flex: 1;
    display: flex;
    min-height: 0;
}

.queries {
    width: 270px;
    flex: none;
    border-right: 1px solid #dedede;
    box-sizing: border-box;
    font-size: 17.5px;
    color: #444444;
}

.queries-head {
    display: flex;
    align-items: center;
    height: 24px;
    margin: 17px 15px 20px 22px;
    font-size: 17.5px;
    color: #666666;
}

.queries-chev {
    width: 12px;
    height: 26px;
    margin-left: auto;
}

.query {
    height: 36px;
    margin: 0 6px;
    padding-left: 12px;
    display: flex;
    align-items: center;
    box-sizing: border-box;
}

.query svg {
    width: 22px;
    height: 20px;
    margin-right: 12px;
}

.query.is-selected {
    background: #d2d0ce;
    border-left: 3px solid #117865;
    padding-left: 9px;
}

.center {
    flex: 1;
    min-width: 0;
    display: flex;
    flex-direction: column;
    padding-top: 16px;
    position: relative;
}

.formula {
    display: flex;
    height: 41px;
    margin: 0 7px 0 6px;
    gap: 6px;
    flex: none;
}

.fx-btns {
    width: 165px;
    background: #ffffff;
    border: 2px solid #d4d4d4;
    box-sizing: border-box;
    display: flex;
    align-items: center;
    padding-left: 19px;
    gap: 27px;
}

.fx-btns svg {
    width: 24px;
    height: 24px;
}

.fx-label {
    font-family: 'Liberation Serif', serif;
    font-style: italic;
    font-size: 21px;
    color: #666666;
    margin-left: 5px;
}

.fx-input {
    flex: 1;
    background: #ffffff;
    border: 2px solid #d4d4d4;
    border-width: 2px 0 2px 0;
    box-sizing: border-box;
    display: flex;
    align-items: center;
    padding: 1px 0 0 14px;
    font-family: 'Liberation Mono', monospace;
    font-size: 16.45px;
    white-space: pre;
    color: #333333;
}

.fx-input .s {
    color: #a31515;
}

.fx-input .n {
    color: #098658;
}

.fx-redact {
    width: 715px;
    height: 26px;
    background: #ebebeb;
    flex: none;
}

.fx-more {
    width: 14px;
    height: 10px;
    margin-left: auto;
    margin-right: 12px;
}

.grid {
    margin: 8px 5px 0 6px;
    display: grid;
    grid-template-columns: 45px 240px 240px 533px repeat(8, 240px);
    grid-template-rows: 30px 6px 32px 31px;
    overflow: hidden;
    flex: none;
    border-top: 2px solid #d4d4d4;
    font-size: 16.5px;
    color: #444444;
}

.th {
    display: flex;
    align-items: center;
    padding-left: 4px;
    background: #f3f2f1;
    border-right: 2px solid #dcdcdc;
    border-bottom: 2px solid #d4d4d4;
    box-sizing: border-box;
    color: #555555;
    white-space: nowrap;
}

.th b {
    font-weight: 700;
    font-size: 16.5px;
    margin-left: 9px;
}

.th.is-sel {
    background: #127a66;
    color: #ffffff;
}

.th-corner {
    padding-left: 9px;
    border-left: 2px solid #dcdcdc;
}

.corner-ic {
    width: 20px;
    height: 20px;
    flex: none;
}

.corner-car {
    width: 0;
    height: 0;
    border: 3px solid transparent;
    border-top: 4px solid #555555;
    border-bottom: 0;
    margin: 12px 0 0 1px;
}

.abc {
    font-size: 15px;
    width: 22px;
    flex: none;
    letter-spacing: -0.5px;
}

.abc sup,
.abc sub {
    font-size: 11px;
    line-height: 0;
}

.filter {
    width: 24px;
    height: 24px;
    margin-left: auto;
    margin-right: 1px;
    background: #ffffff;
    border: 1px solid #b0b0b0;
    box-sizing: border-box;
    display: flex;
    align-items: center;
    justify-content: center;
    flex: none;
}

.filter::after {
    content: "";
    border: 4px solid transparent;
    border-top: 6px solid #777777;
    border-bottom: 0;
}

.qb {
    background: #00b5a5;
    border-right: 2px solid #ffffff;
    box-sizing: border-box;
}

.qb-corner {
    background: #f3f2f1;
    border-right: 2px solid #dcdcdc;
    border-left: 2px solid #dcdcdc;
}

.qb-half {
    background: linear-gradient(90deg, #00b5a5 50%, #666666 50%);
}

.td {
    background: #ffffff;
    display: flex;
    align-items: center;
    padding-left: 4px;
    border-right: 2px solid #dcdcdc;
    border-bottom: 2px solid #dcdcdc;
    box-sizing: border-box;
    white-space: nowrap;
    overflow: hidden;
}

.td.rn {
    background: #f3f2f1;
    justify-content: center;
    color: #777777;
    border-left: 2px solid #dcdcdc;
    padding-left: 0;
    font-size: 17px;
}

.td.is-sel {
    background: #e6e6e6;
}

.hscroll {
    margin-top: auto;
    margin-left: 51px;
    height: 26px;
    background: #f0f0f0;
    display: flex;
    align-items: center;
    flex: none;
    border-right: 1px solid #e0e0e0;
}

.hs-left {
    width: 12px;
    height: 26px;
    margin-left: 26px;
}

.hs-thumb {
    width: 166px;
    height: 22px;
    background: #cccccc;
    margin-left: 13px;
}

.hs-right {
    width: 12px;
    height: 26px;
    margin-left: auto;
    margin-right: 34px;
}

/* Query settings */
.settings {
    width: 398px;
    flex: none;
    border-left: 1px solid #dedede;
    box-sizing: border-box;
    padding-left: 34px;
    display: flex;
    flex-direction: column;
    font-size: 16.5px;
    color: #444444;
}

.settings-head {
    display: flex;
    align-items: center;
    height: 28px;
    margin: 15px 39px 0 -17px;
    font-size: 19px;
    color: #666666;
}

.settings-head svg {
    width: 18px;
    height: 26px;
    margin-left: auto;
}

.settings-sec {
    height: 24px;
    line-height: 24px;
    font-weight: 700;
    font-size: 16.5px;
    color: #444444;
    position: relative;
}

.settings-sec::before {
    content: "";
    position: absolute;
    left: -17px;
    top: 7px;
    border: 5px solid transparent;
    border-right: 5px solid #555555;
    border-bottom: 5px solid #555555;
}

.settings-sec-first {
    margin-top: 22px;
}

.settings-name {
    height: 24px;
    line-height: 24px;
    margin-top: 6px;
}

.settings-input {
    margin-top: 2px;
    width: 327px;
    height: 32px;
    line-height: 30px;
    background: #ffffff;
    border: 1px solid #dddddd;
    border-top: 2px solid #cccccc;
    box-sizing: border-box;
    padding-left: 8px;
    color: #a0a0a0;
}

.settings-link {
    height: 24px;
    line-height: 24px;
    margin-top: 13px;
    color: #117865;
    font-size: 17.5px;
}

.settings-sec-steps {
    margin-top: 27px;
}

.steps {
    margin-top: 8px;
    width: 327px;
    height: 1373px;
    border: 1px solid #dddddd;
    border-top: 0;
    box-sizing: border-box;
    font-size: 18px;
}

.step {
    height: 30.2px;
    display: flex;
    align-items: center;
    padding: 2px 12px 0 33px;
    box-sizing: border-box;
}

.step.is-selected {
    background: #c8c6c4;
    border-left: 2px solid #117865;
    padding-left: 32px;
}

.step svg {
    width: 14px;
    height: 18px;
    margin-left: auto;
}

.pq-status {
    height: 32px;
    flex: none;
    border-top: 2px solid #dcdcdc;
    border-bottom: 2px solid #dcdcdc;
    box-sizing: border-box;
    display: flex;
    align-items: center;
    font-size: 16.4px;
    color: #555555;
    padding: 0 8px 0 7px;
    gap: 22px;
}

.pq-status-right {
    margin-left: auto;
}

/* Dialog */
.dialog {
    position: absolute;
    left: 1395px;
    top: 739px;
    width: 1051px;
    height: 623px;
    background: #ffffff;
    border: 1px solid #dedede;
    box-sizing: border-box;
    box-shadow: 3px 3px 5px rgba(0, 0, 0, 0.3);
    padding: 29px 47px 43px 44px;
    display: flex;
    flex-direction: column;
}

.dialog-x {
    position: absolute;
    top: 11px;
    right: 15px;
    width: 18px;
    height: 18px;
}

.dialog h2 {
    margin: 0;
    font-size: 30px;
    font-weight: 500;
    line-height: 40px;
    color: #252423;
}

.radios {
    margin-top: 26px;
    height: 24px;
    display: flex;
    align-items: center;
    font-size: 17.5px;
    color: #555555;
}

.radio {
    width: 18px;
    height: 18px;
    border-radius: 50%;
    border: 1px solid #666666;
    box-sizing: border-box;
    margin: 0 6px 0 2px;
}

.radio.is-on {
    border-color: #117865;
    background: radial-gradient(circle, #117865 0 5.5px, #ffffff 6px);
}

.radio-adv {
    margin-left: 20px;
}

.d-label {
    height: 24px;
    line-height: 24px;
    font-size: 18px;
    color: #555555;
}

.d-label-path {
    margin-top: 17px;
}

.path-row {
    margin: 2px 0 0 2px;
    display: flex;
    gap: 7px;
    height: 38px;
}

.path-input {
    width: 601px;
    border: 2px solid #222222;
    border-radius: 3px;
    box-sizing: border-box;
    display: flex;
    align-items: center;
    padding-left: 5px;
    font-size: 17.5px;
    color: #444444;
}

.path-text {
    width: 75px;
    flex: none;
}

.path-redact {
    width: 512px;
    height: 26px;
    background: #ebebeb;
    flex: none;
}

.d-btn {
    display: flex;
    align-items: center;
    justify-content: center;
    border: 1px solid #d0d0d0;
    border-bottom: 2px solid #b8b8b8;
    border-radius: 3px;
    box-sizing: border-box;
    font-size: 19px;
    font-weight: 500;
    color: #333333;
    background: #ffffff;
}

.browse {
    width: 114px;
    font-size: 18.5px;
}

.field {
    margin-top: 9.5px;
}

.field .d-label {
    margin-bottom: 3px;
}

.select {
    width: 345px;
    height: 37px;
    margin-left: 2px;
    border: 1px solid #d0d0d0;
    border-bottom: 2px solid #a8a8a8;
    border-radius: 3px;
    box-sizing: border-box;
    display: flex;
    align-items: center;
    padding-left: 12px;
    font-size: 18px;
    color: #666666;
}

.select i {
    margin-left: auto;
    margin-right: 10px;
    border: 4px solid transparent;
    border-top: 6px solid #666666;
    border-bottom: 0;
}

.dialog-foot {
    margin-top: auto;
    display: flex;
    justify-content: flex-end;
    gap: 22px;
    height: 39px;
}

.d-ok {
    width: 98px;
    background: #117865;
    border: 0;
    color: #ffffff;
}

.d-cancel {
    width: 96px;
}

/* Selection outline */
.edge-left {
    position: absolute;
    left: 89px;
    top: 240px;
    width: 11px;
    height: 1762px;
    background:
        linear-gradient(#1f2a36, #1f2a36) 3px 0 / 8px 100% no-repeat,
        repeating-linear-gradient(#8a4a3a 0 3px, #ffffff 3px 6px) 0 0 / 3px 100% no-repeat;
}

.edge-bottom {
    position: absolute;
    left: 89px;
    top: 2000px;
    width: 405px;
    height: 3px;
    background: repeating-linear-gradient(90deg, #6a5a50 0 3px, #ffffff 3px 6px);
}

/* Hint bar */
.hint {
    position: absolute;
    left: 494px;
    top: 2001px;
    width: 2881px;
    height: 44px;
    background: #333333;
    border-bottom: 2px solid #222222;
    box-sizing: border-box;
    display: flex;
    align-items: center;
    padding: 2px 0 0 26px;
    font-size: 18.1px;
    color: #b8b8b8;
    white-space: nowrap;
}

.hint b {
    color: #ffffff;
    font-weight: 700;
}

.hint-grip {
    width: 12px;
    height: 14px;
    margin-left: auto;
    margin-right: 8px;
    align-self: flex-end;
    margin-bottom: 6px;
}

/* Red annotations */
.frame {
    position: absolute;
    border: 8px solid #c80000;
    border-radius: 3px;
    box-sizing: border-box;
}

.frame-close { left: 102px; top: 164px; width: 77px; height: 120px; }
.frame-formula { left: 362px; top: 307px; width: 2986px; height: 193px; border-width: 9px; }
.frame-step { left: 3666px; top: 550px; width: 39px; height: 42px; background: rgba(232, 232, 232, 0.7); }
.frame-browse { left: 2039px; top: 893px; width: 135px; height: 56px; }
.frame-ok { left: 2166px; top: 1269px; width: 133px; height: 57px; }

.num {
    position: absolute;
    font-family: 'Liberation Sans', sans-serif;
    font-size: 79px;
    line-height: 57px;
    color: #c80000;
    width: 60px;
    text-align: center;
}

.num-1 { left: 3650px; top: 489px; }
.num-2 { left: 2076px; top: 830px; }
.num-3 { left: 2204px; top: 1209px; }
.num-4 { left: 2006px; top: 231px; }
.num-5 { left: 175px; top: 287px; }
```
